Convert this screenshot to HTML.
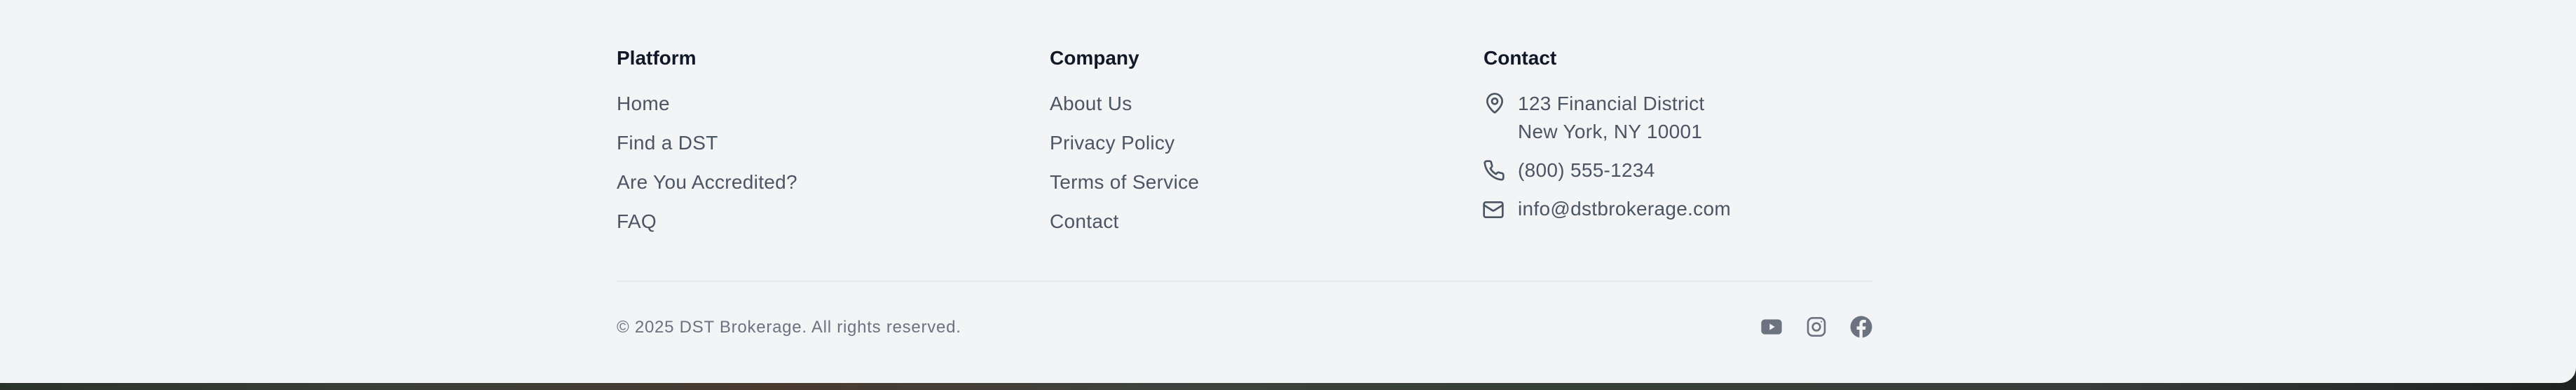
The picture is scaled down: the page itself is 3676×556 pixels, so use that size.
<!DOCTYPE html>
<html><head><meta charset="utf-8"><style>
*{margin:0;padding:0;box-sizing:border-box}
html,body{width:3676px;height:556px;overflow:hidden;background:#2c302c}
.strip{position:absolute;left:0;top:536px;width:3676px;height:20px;background:linear-gradient(90deg,#2a332b 0%,#3a3f38 15%,#4a3a30 30%,#3e423e 45%,#354036 60%,#3a3d3b 80%,#1e2220 100%)}
.panel{position:absolute;left:0;top:0;width:3676px;height:546px;background:#f3f4f6;border-bottom-right-radius:22px}
.t{position:absolute;font-family:"Liberation Sans",sans-serif;font-size:28px;line-height:28px;color:#4b5563;white-space:nowrap;letter-spacing:0.3px}
.h{color:#111827;font-weight:bold;letter-spacing:0}
.ic{position:absolute;width:32px;height:32px}
</style></head><body>
<div class="strip"></div>
<div class="panel">
<div class="t h" style="left:880px;top:69px">Platform</div>
<div class="t" style="left:880px;top:134px">Home</div>
<div class="t" style="left:880px;top:190px">Find a DST</div>
<div class="t" style="left:880px;top:246px">Are You Accredited?</div>
<div class="t" style="left:880px;top:302px">FAQ</div>

<div class="t h" style="left:1498px;top:69px">Company</div>
<div class="t" style="left:1498px;top:134px">About Us</div>
<div class="t" style="left:1498px;top:190px">Privacy Policy</div>
<div class="t" style="left:1498px;top:246px">Terms of Service</div>
<div class="t" style="left:1498px;top:302px">Contact</div>

<div class="t h" style="left:2117px;top:69px">Contact</div>
<svg class="ic" style="left:2117px;top:131px" viewBox="0 0 24 24" fill="none" stroke="#4b5563" stroke-width="2" stroke-linecap="round" stroke-linejoin="round"><path d="M20 10c0 5-5.5 10.2-7.4 11.8a1 1 0 0 1-1.2 0C9.5 20.2 4 15 4 10a8 8 0 0 1 16 0"/><circle cx="12" cy="10" r="3"/></svg>
<div class="t" style="left:2166px;top:134px">123 Financial District</div>
<div class="t" style="left:2166px;top:174px">New York, NY 10001</div>
<svg class="ic" style="left:2116px;top:227px" viewBox="0 0 24 24" fill="none" stroke="#4b5563" stroke-width="2" stroke-linecap="round" stroke-linejoin="round"><path d="M22 16.9v3a2 2 0 0 1-2.2 2 19.8 19.8 0 0 1-8.6-3.1 19.5 19.5 0 0 1-6-6A19.8 19.8 0 0 1 2.1 4.2 2 2 0 0 1 4.1 2h3a2 2 0 0 1 2 1.7c.1 1 .4 1.9.7 2.8a2 2 0 0 1-.5 2.1L8.1 9.9a16 16 0 0 0 6 6l1.3-1.3a2 2 0 0 1 2.1-.4c.9.3 1.8.6 2.8.7a2 2 0 0 1 1.7 2z"/></svg>
<div class="t" style="left:2166px;top:229px">(800) 555-1234</div>
<svg class="ic" style="left:2115px;top:283px" viewBox="0 0 24 24" fill="none" stroke="#4b5563" stroke-width="2" stroke-linecap="round" stroke-linejoin="round"><rect x="2" y="4" width="20" height="16" rx="2"/><path d="m22 7-8.97 5.7a1.94 1.94 0 0 1-2.06 0L2 7"/></svg>
<div class="t" style="left:2166px;top:284px">info@dstbrokerage.com</div>

<div style="position:absolute;left:880px;top:400px;width:1792px;height:2px;background:#e5e7eb"></div>
<div class="t" style="left:880px;top:455px;font-size:24px;line-height:24px;color:#6b7280;letter-spacing:0.75px">© 2025 DST Brokerage. All rights reserved.</div>

<svg class="ic" style="left:2512px;top:450px" viewBox="0 0 24 24"><rect x="1" y="4" width="22" height="16" rx="4" fill="#6b7280"/><path d="M10 8.5v7l5.5-3.5z" fill="#f3f4f6"/></svg>
<svg class="ic" style="left:2576px;top:450px" viewBox="0 0 24 24" fill="none" stroke="#6b7280" stroke-width="2"><rect x="3" y="2.5" width="18" height="19" rx="5"/><circle cx="12" cy="12" r="4"/><circle cx="17.3" cy="6.5" r="0.8" fill="#6b7280" stroke="none"/></svg>
<svg class="ic" style="left:2640px;top:450px" viewBox="0 0 24 24"><circle cx="12" cy="12" r="11.6" fill="#6b7280"/><path d="M13.4 24V15h3l.5-3.5h-3.5V9.3c0-1 .3-1.7 1.8-1.7H17V4.5c-.3 0-1.4-.1-2.6-.1-2.6 0-4.3 1.6-4.3 4.5v2.6H7.2V15h2.9v9z" fill="#f3f4f6"/></svg>
</div>
</body></html>
